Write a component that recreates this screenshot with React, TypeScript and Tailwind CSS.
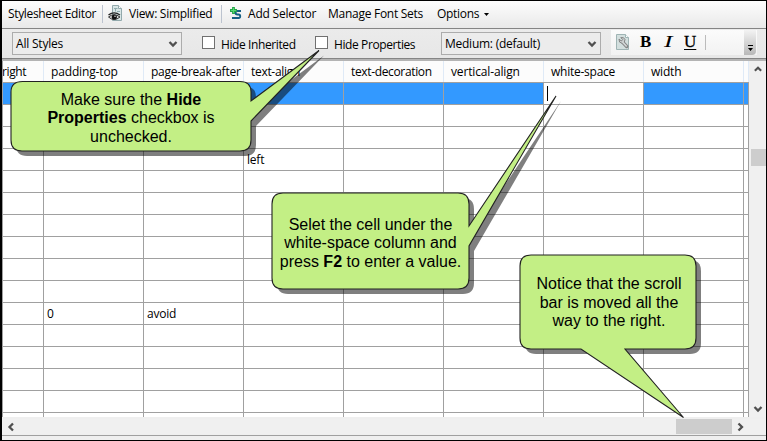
import React from "react";

const ui = "font-['Open_Sans','Noto_Sans',sans-serif] text-[12px] leading-[16px] text-black whitespace-nowrap";

const columns = [
  { name: "right", w: "w-[41px]", pad: "pl-0", track: "-ml-px tracking-[-0.4px]" },
  { name: "padding-top", w: "w-[100px]", pad: "pl-[7px]", track: "tracking-[-0.15px]" },
  { name: "page-break-after", w: "w-[100px]", pad: "pl-[7px]", track: "tracking-[-0.25px]" },
  { name: "text-align", w: "w-[100px]", pad: "pl-[7px]", track: "tracking-[-0.3px]" },
  { name: "text-decoration", w: "w-[100px]", pad: "pl-[7px]", track: "tracking-[-0.35px]" },
  { name: "vertical-align", w: "w-[100px]", pad: "pl-[7px]", track: "tracking-[-0.15px]" },
  { name: "white-space", w: "w-[100px]", pad: "pl-[7px]", track: "tracking-[-0.25px]" },
  { name: "width", w: "w-[100px]", pad: "pl-[7px]", track: "tracking-[-0.2px]" },
  { name: "", w: "w-[5px]", pad: "", track: "" },
];

const cells: Record<string, string> = { "3:3": "left", "10:1": "0", "10:2": "avoid" };

function Chevron({ d, className }: { d: string; className: string }) {
  return (
    <svg className={className} viewBox="0 0 10 10" fill="none" stroke="#505050" strokeWidth="2.300">
      <path d={d} />
    </svg>
  );
}

function ViewIcon() {
  return (
    <svg className="h-[17px] w-[15px] shrink-0" viewBox="0 0 15 17">
      <path d="M4.500.5h6l3 3v12h-9z" fill="#d9e6e6" stroke="#92a9ac" />
      <path d="M10.500.5v3h3" fill="#fff" stroke="#92a9ac" />
      <path d="M6 3.500h3.500M7.500 3.500v3M9 6.500h3" stroke="#8fabad" />
      <path d="M.5 10Q6 5.800 12 10" fill="none" stroke="#222" strokeWidth="1.400" />
      <path d="M.5 12Q6 7.500 12 12Q6 17 .5 12Z" fill="#ddd" stroke="#333" />
      <circle cx="6.300" cy="12" r="2.600" fill="#111" />
      <circle cx="7" cy="11.200" r=".7" fill="#fff" />
    </svg>
  );
}

function AddIcon() {
  return (
    <svg className="h-[13px] w-[12px] shrink-0" viewBox="0 0 12 13" fill="none">
      <path d="M11 4H7.500Q5.500 4 5.500 5.700T7.500 7.500H8.500Q10.200 7.500 10.200 9.300T8.500 11H2" stroke="#155f83" strokeWidth="1.900" />
      <path d="M3.500 0v7M0 3.500h7" stroke="#24a647" strokeWidth="2.800" />
      <path d="M3.500 1v5M1 3.500h5" stroke="#55d872" strokeWidth="1" />
    </svg>
  );
}

function WrenchIcon() {
  return (
    <svg className="h-[16px] w-[13px] shrink-0" viewBox="0 0 13 16">
      <path d="M.5.5h9l3 3v12H.5z" fill="#d3dfde" stroke="#9fb4b4" />
      <path d="M9.500.5v3h3" fill="#fff" stroke="#9fb4b4" />
      <path d="M6.500 8l4.200 4.500" stroke="#858585" strokeWidth="3.400" strokeLinecap="round" />
      <path d="M3 5l2.300 2 1.400-1.400L4.800 3.600Q8 2.800 9 5.500 9 9 6 9.300 2.700 9 3 5Z" fill="#ccd0d0" stroke="#858585" />
      <path d="M6.500 8l4.200 4.500" stroke="#d4d9d9" strokeWidth="1.600" />
    </svg>
  );
}

function Combo({ label, className, track }: { label: string; className: string; track: string }) {
  return (
    <div className={`flex h-[23px] shrink-0 items-center justify-between border border-[#acacac] bg-[#ececec] pr-[3px] pl-[3px] ${className}`}>
      <span className={`${ui} ${track}`}>{label}</span>
      <Chevron d="M1.500 3l3.500 3.500L8.500 3" className="h-[10px] w-[10px]" />
    </div>
  );
}

function Check({ label, className, track }: { label: string; className: string; track: string }) {
  return (
    <label className={`flex shrink-0 items-start ${className}`}>
      <span className="h-[13px] w-[13px] border border-[#707070] bg-white" />
      <span className={`${ui} ml-[6px] mt-px ${track}`}>{label}</span>
    </label>
  );
}

function TopBar() {
  return (
    <div className="flex h-[28px] shrink-0 items-center border-b border-[#858585] bg-gradient-to-b from-[#fdfdfd] to-[#e9e9e9] pl-[6px] pb-[2px]">
      <span className={`${ui} w-[94px] tracking-[-0.35px]`}>Stylesheet Editor</span>
      <span className="h-[18px] w-px bg-[#bcc3cf]" />
      <span className="ml-[5px] w-[21px]"><ViewIcon /></span>
      <span className={`${ui} w-[92px] tracking-[-0.27px]`}>View: Simplified</span>
      <span className="h-[18px] w-px bg-[#bcc3cf]" />
      <span className="ml-[8px] w-[18px]"><AddIcon /></span>
      <span className={`${ui} w-[80px] tracking-[-0.2px]`}>Add Selector</span>
      <span className={`${ui} w-[109px] tracking-[-0.27px]`}>Manage Font Sets</span>
      <span className={`${ui} w-[47px] tracking-[-0.3px]`}>Options</span>
      <svg className="mt-px h-[3px] w-[5px]" viewBox="0 0 5 3"><path d="M0 0h5L2.500 3z" /></svg>
    </div>
  );
}

function OptionsBar() {
  return (
    <div className="flex h-[29px] shrink-0 items-start bg-gradient-to-b from-[#ebebeb] to-[#e7e7e7] pl-[10px]">
      <Combo label="All Styles" className="mt-[3px] w-[170px]" track="tracking-[-0.2px]" />
      <Check label="Hide Inherited" className="mt-[7px] ml-[20px] w-[113px]" track="tracking-[-0.4px]" />
      <Check label="Hide Properties" className="mt-[7px] w-[126px]" track="tracking-[-0.4px]" />
      <Combo label="Medium: (default)" className="mt-[3px] w-[160px]" track="tracking-[-0.25px]" />
      <div className="mt-px ml-[10px] flex h-[25px] w-[146px] shrink-0 items-start bg-gradient-to-b from-[#fbfbfb] to-[#f2f2f2] pl-[5px] font-['Liberation_Serif',serif] text-[17px] leading-[20px]">
        <span className="mt-[4px] w-[24px] shrink-0"><WrenchIcon /></span>
        <b className="mt-[2px] w-[22px] shrink-0">B</b>
        <span className="mt-[2px] w-[22px] shrink-0 scale-x-150 pl-[5px] italic">I</span>
        <span className="mt-[2px] w-[21px] shrink-0 underline decoration-1 underline-offset-[2px] [-webkit-text-stroke:0.3px_black]">U</span>
        <span className="mt-[5px] h-[15px] w-px bg-[#bbb]" />
        <span className="ml-[38px] flex h-[25px] w-[12px] shrink-0 items-end justify-center rounded-br-[4px] bg-gradient-to-b from-[#f3f3f3] to-[#b8b8b8] pb-[3px]">
          <svg className="h-[7px] w-[5px]" viewBox="0 0 5 7"><path d="M0 0h5v1H0zM0 3h5L2.500 6z" /></svg>
        </span>
      </div>
    </div>
  );
}

function Grid() {
  return (
    <div className="flex h-[356px] w-[746px] flex-col overflow-hidden bg-white">
      <div className="flex h-[21px] shrink-0 bg-[#fcfcfc]">
        {columns.map((c, i) => (
          <div key={i} className={`h-full shrink-0 border-r border-[#dfeaf7] pt-[3px] ${c.w} ${c.pad}`}>
            <span className={`${ui} block ${c.track}`}>{c.name}</span>
          </div>
        ))}
      </div>
      {Array.from({ length: 16 }, (_, r) => (
        <div key={r} className="flex h-[22px] shrink-0 border-t border-[#a0a0a0]">
          {columns.map((c, i) => (
            <div
              key={i}
              className={`h-full shrink-0 border-r border-[#a0a0a0] pl-[3px] pt-[3px] ${c.w} ${r === 0 && i !== 6 ? "bg-[#3399ff]" : ""}`}
            >
              {r === 0 && i === 6 ? (
                <span className="block h-[15px] w-px bg-black" />
              ) : (
                <span className={`${ui} block tracking-[-0.2px]`}>{cells[`${r}:${i}`]}</span>
              )}
            </div>
          ))}
        </div>
      ))}
    </div>
  );
}

const callouts = [
  "M22.500 81.500H240Q251 81.500 251 92V101L319 50.500L251 121V140Q251 151 240 151H22Q11 151 11 140V92Q11 81.500 22.500 81.500Z",
  "M283 193H458Q469 193 469 204V226L556 96L469 246V278Q469 289 458 289H283Q272 289 272 278V204Q272 193 283 193Z",
  "M531 255H685Q696 255 696 266V338Q696 349 685 349H625L683.500 417.500L581 349H531Q520 349 520 338V266Q520 255 531 255Z",
];
const shadows = [callouts[0], callouts[1], "M531 255H685Q696 255 696 266V338Q696 349 685 349H531Q520 349 520 338V266Q520 255 531 255Z"];
const note = "absolute flex flex-col items-center justify-center text-center font-['Liberation_Sans',Arial,sans-serif] text-[16px] leading-[18.500px] whitespace-nowrap";

function Callouts() {
  return (
    <>
      <svg className="absolute left-0 top-0 h-[441px] w-[767px]" viewBox="0 0 767 441">
        {callouts.map((d, i) => (
          <g key={i}>
            <path d={shadows[i]} transform="translate(5 5)" fill="#000" fillOpacity=".5" />
            <path d={d} fill="#c3ef85" stroke="#222" strokeWidth="1.100" />
          </g>
        ))}
      </svg>
      <div className={`${note} left-[11px] top-[84px] h-[69px] w-[240px]`}>
        <span>Make sure the <b>Hide</b></span>
        <span><b>Properties</b> checkbox is</span>
        <span>unchecked.</span>
      </div>
      <div className={`${note} left-[272px] top-[193px] h-[101px] w-[197px]`}>
        <span>Selet the cell under the</span>
        <span>white-space column and</span>
        <span>press <b>F2</b> to enter a value.</span>
      </div>
      <div className={`${note} left-[521px] top-[256px] h-[94px] w-[176px]`}>
        <span>Notice that the scroll</span>
        <span>bar is moved all the</span>
        <span>way to the right.</span>
      </div>
    </>
  );
}

export default function App() {
  return (
    <div className="relative flex h-[441px] w-[767px] flex-col overflow-hidden border-y border-l-2 border-r border-black bg-[#efefef]">
      <TopBar />
      <OptionsBar />
      <div className="h-[3px] shrink-0 border-t border-[#858585] bg-[#b4b4b4]" />
      <div className="flex h-[356px] shrink-0 border-l border-[#a0a0a0]">
        <Grid />
        <div className="flex h-full w-[17px] flex-col items-center bg-[#f0f0f0] pl-px">
          <Chevron d="M1.500 6.500L5 3l3.500 3.500" className="mt-[4px] h-[9px] w-[10px]" />
          <div className="mt-[75px] h-[17px] w-[15px] bg-[#cdcdcd]" />
          <Chevron d="M1.500 3L5 6.500 8.500 3" className="mt-[238px] h-[10px] w-[10px]" />
        </div>
      </div>
      <div className="mt-[2px] flex h-[15px] shrink-0 items-center bg-[#f0f0f0]">
        <Chevron d="M7 1.500L3.500 5 7 8.500" className="ml-[4px] h-[10px] w-[10px]" />
        <div className="ml-[660px] h-[15px] w-[56px] bg-[#cdcdcd]" />
        <Chevron d="M3.500 1.500L7 5 3.500 8.500" className="ml-[3px] h-[10px] w-[10px]" />
      </div>
      <div className="mt-px h-px shrink-0 bg-[#a0a0a0]" />
      <div className="absolute -left-[2px] -top-px h-[441px] w-[767px]">
        <Callouts />
      </div>
    </div>
  );
}
